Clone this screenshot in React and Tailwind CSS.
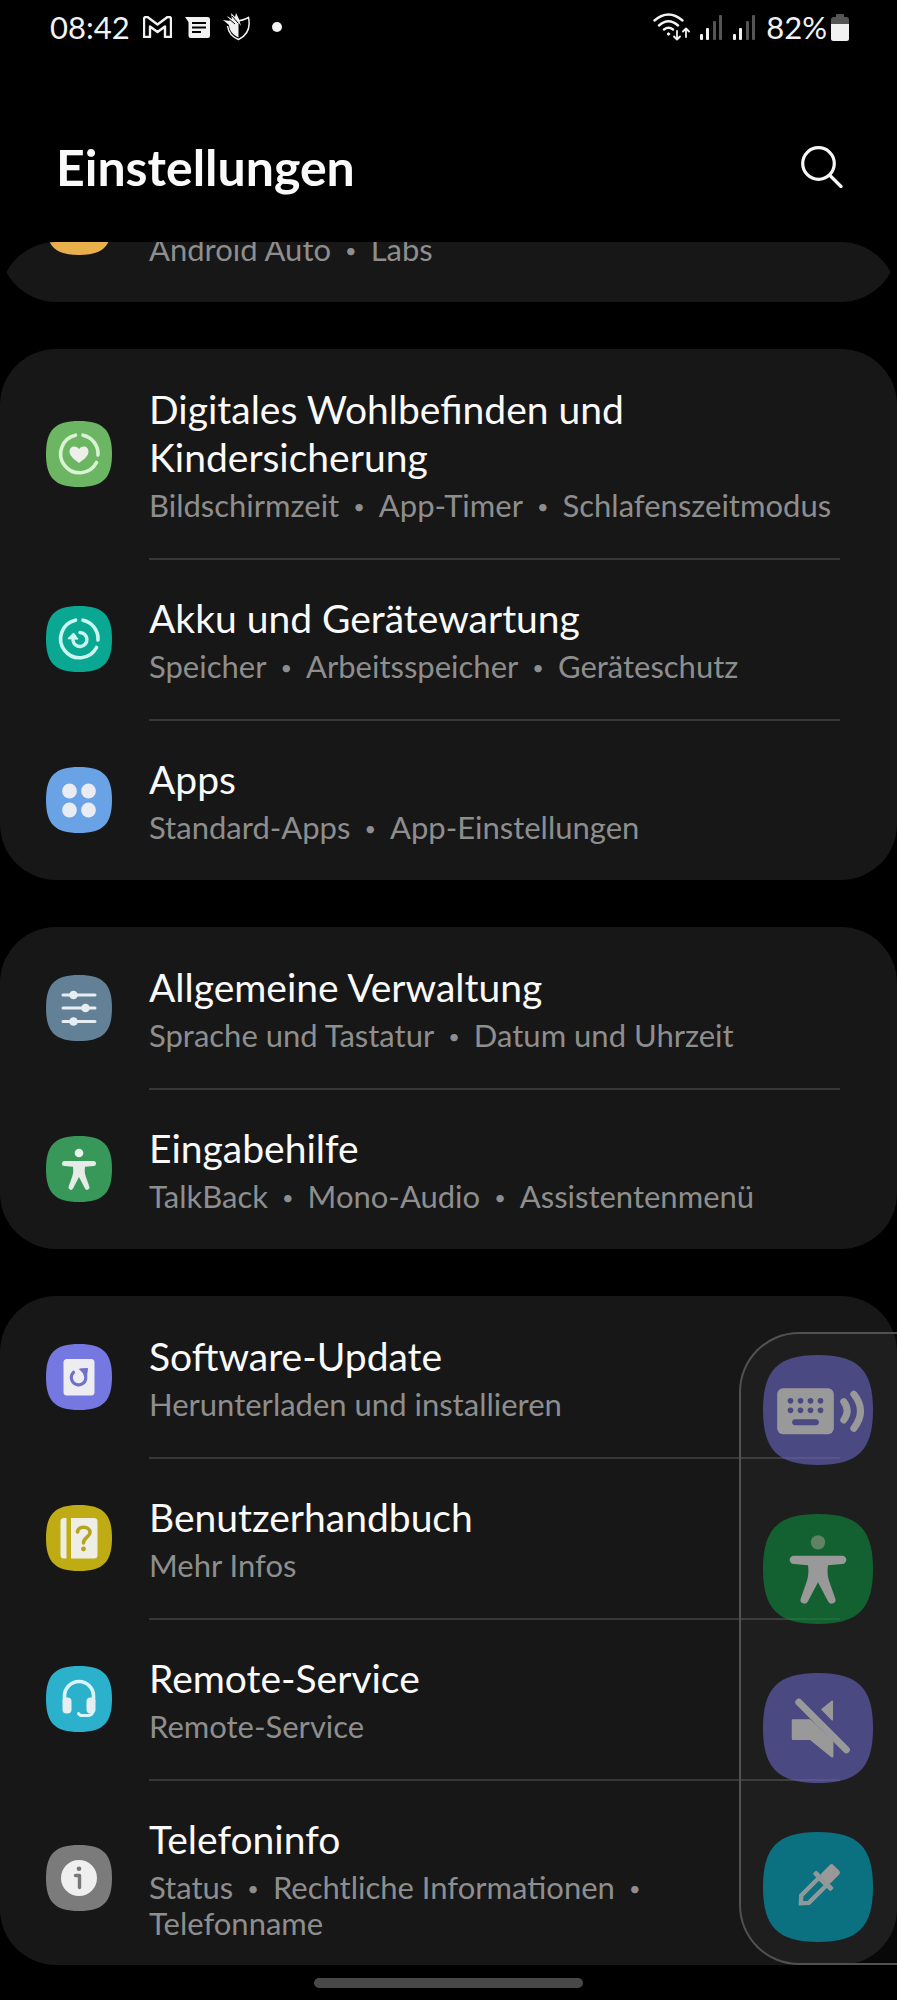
import React from 'react';
import { clsx } from 'clsx';

const SQUIRCLE = 'M33 0C57 0 66 9 66 33S57 66 33 66 0 57 0 33 9 0 33 0Z';

const Squircle = ({ color, className, children }) => (
  <svg viewBox="0 0 66 66" className={clsx('flex-shrink-0', className)} aria-hidden="true">
    <path d={SQUIRCLE} fill={color} />
    {children}
  </svg>
);

const Person = ({ head = '#e8f5ec', body = '#e6ebe7' }) => (
  <>
    <circle cx="33" cy="17" r="4.3" fill={head} />
    <path
      d="M18.500 25H47.500a2.500 2.500 0 0 1 0 5L39 30.700C38.500 34 38.700 37 39.600 40L43.300 50.500a2.300 2.300 0 0 1-4.300 1.900L33 41 27 52.400a2.300 2.300 0 0 1-4.300-1.900L26.400 40C27.300 37 27.500 34 27 30.700L18.500 30a2.500 2.500 0 0 1 0-5Z"
      fill={body}
    />
  </>
);

// three-part ring shared by the wellbeing and device care icons
const Ring = ({ color }) => (
  <path
    d="M29.500 14.200A19 19 0 1 0 50.500 41.500M37 14.200A19 19 0 0 1 52 34"
    fill="none"
    stroke={color}
    strokeWidth="3.600"
    strokeLinecap="round"
  />
);

const icons = {
  features: <Squircle color="#e8b04a" className="w-[66px]" />,
  wellbeing: (
    <Squircle color="#6cb663" className="w-[66px]">
      <Ring color="#d9f3d2" />
      <path d="M33 42C28 38.500 23.500 35 23.500 30.600c0-5.600 6.500-6.800 9.500-2.600 3-4.200 9.500-3 9.500 2.600C42.500 35 38 38.500 33 42Z" fill="#eeeeea" />
    </Squircle>
  ),
  care: (
    <Squircle color="#0aa893" className="w-[66px]">
      <Ring color="#c9f7ef" />
      <path d="M34 26.500A7 7 0 1 1 27 34.500" fill="none" stroke="#c9f7ef" strokeWidth="3.400" strokeLinecap="round" />
      <path d="M27.500 27.500 31.500 33 22.500 32.500Z" fill="#c9f7ef" stroke="#c9f7ef" strokeWidth="1.500" strokeLinejoin="round" />
    </Squircle>
  ),
  apps: (
    <Squircle color="#6aa2e6" className="w-[66px]">
      <g fill="#e9edf3">
        <circle cx="23.500" cy="24" r="7.400" />
        <circle cx="42.500" cy="24" r="7.400" />
        <circle cx="23.500" cy="43" r="7.400" />
        <circle cx="42.500" cy="43" r="7.400" />
      </g>
    </Squircle>
  ),
  general: (
    <Squircle color="#628196" className="w-[66px]">
      <path d="M17 20H49M17 33H49M17 46.500H49" stroke="#e6eef3" strokeWidth="3" strokeLinecap="round" />
      <g fill="#e6eef3">
        <circle cx="27.500" cy="20" r="4.300" />
        <circle cx="39.500" cy="33" r="4.300" />
        <circle cx="27.500" cy="46.500" r="4.300" />
      </g>
    </Squircle>
  ),
  accessibility: (
    <Squircle color="#37985a" className="w-[66px]">
      <Person />
    </Squircle>
  ),
  update: (
    <Squircle color="#7578e0" className="w-[66px]">
      <rect x="17.500" y="15" width="31" height="36.500" rx="3.500" fill="#ececf1" />
      <path d="M27.500 28.300A7.300 7.300 0 1 0 38.800 29.800" fill="none" stroke="#6f72cb" strokeWidth="3.200" strokeLinecap="round" />
      <path d="M33.500 25 41.500 24.500 40.500 32.500Z" fill="#6f72cb" stroke="#6f72cb" strokeWidth="1" strokeLinejoin="round" />
    </Squircle>
  ),
  manual: (
    <Squircle color="#bfac14" className="w-[66px]">
      <path d="M18 13H20.500V53.500H18a3.500 3.500 0 0 1-3.500-3.500V16.500A3.500 3.500 0 0 1 18 13Z" fill="#eeeee0" />
      <path d="M25 13H48a3.500 3.500 0 0 1 3.500 3.500V50a3.500 3.500 0 0 1-3.500 3.500H25Z" fill="#eeeee6" />
      <path d="M31.500 27C32 20.500 44 20.500 44 27.500 44 32 37.500 32.500 37.500 38" fill="none" stroke="#b5a41f" strokeWidth="3.600" strokeLinecap="round" />
      <circle cx="37.500" cy="44" r="2.400" fill="#b5a41f" />
    </Squircle>
  ),
  remote: (
    <Squircle color="#2cb1cd" className="w-[66px]">
      <path d="M18.500 36V30a14.500 14.500 0 0 1 29 0V36" fill="none" stroke="#d9f5fa" strokeWidth="3.600" />
      <rect x="16.500" y="31.500" width="9" height="16" rx="4" fill="#e5eef0" />
      <rect x="40.500" y="31.500" width="9" height="16" rx="4" fill="#e5eef0" />
      <path d="M47 44C47 48.500 45 49.500 42 49.500H36Q33.500 49.500 32.500 47.500" fill="none" stroke="#d9f5fa" strokeWidth="3" strokeLinecap="round" />
    </Squircle>
  ),
  info: (
    <Squircle color="#7b7b7b" className="w-[66px]">
      <circle cx="33" cy="33" r="18" fill="#efefef" />
      <circle cx="33" cy="23.700" r="2.300" fill="#777777" />
      <path d="M29.500 30.500H33.500V42.500" fill="none" stroke="#777777" strokeWidth="3.400" strokeLinecap="round" strokeLinejoin="round" />
    </Squircle>
  ),
};

const groups = [
  [{ id: 'features', title: [], info: [['Android Auto', 'Labs']] }],
  [
    {
      id: 'wellbeing',
      title: ['Digitales Wohlbefinden und', 'Kindersicherung'],
      info: [['Bildschirmzeit', 'App-Timer', 'Schlafenszeitmodus']],
    },
    { id: 'care', title: ['Akku und Gerätewartung'], info: [['Speicher', 'Arbeitsspeicher', 'Geräteschutz']] },
    { id: 'apps', title: ['Apps'], info: [['Standard-Apps', 'App-Einstellungen']] },
  ],
  [
    { id: 'general', title: ['Allgemeine Verwaltung'], info: [['Sprache und Tastatur', 'Datum und Uhrzeit']] },
    { id: 'accessibility', title: ['Eingabehilfe'], info: [['TalkBack', 'Mono-Audio', 'Assistentenmenü']] },
  ],
  [
    { id: 'update', title: ['Software-Update'], info: [['Herunterladen und installieren']] },
    { id: 'manual', title: ['Benutzerhandbuch'], info: [['Mehr Infos']] },
    { id: 'remote', title: ['Remote-Service'], info: [['Remote-Service']] },
    { id: 'info', title: ['Telefoninfo'], info: [['Status', 'Rechtliche Informationen', ''], ['Telefonname']] },
  ],
];

const shortcuts = [
  {
    label: 'Tastatur vorlesen',
    color: '#6966c5',
    glyph: (
      <>
        <rect x="8.500" y="20" width="34" height="27.500" rx="3.500" fill="#ebebeb" />
        <g fill="#6966c5">
          {[16.5, 22.5, 28.5, 34.5].map((x) => (
            <React.Fragment key={x}>
              <circle cx={x} cy="27.500" r="1.700" />
              <circle cx={x} cy="33.200" r="1.700" />
            </React.Fragment>
          ))}
          <rect x="17.500" y="38.500" width="16" height="3.600" rx="1.800" />
        </g>
        <path d="M48.500 28Q52.500 33.500 48.500 39M54.500 23.500Q62.500 33.500 54.500 44" fill="none" stroke="#ebebeb" strokeWidth="4.200" strokeLinecap="round" />
      </>
    ),
  },
  {
    label: 'Eingabehilfe',
    color: '#0d8e3c',
    glyph: <Person head="#8cc793" body="#ebebeb" />,
  },
  {
    label: 'Stumm',
    color: '#6966c5',
    glyph: (
      <g fill="#ebebeb" stroke="#ebebeb" strokeLinejoin="round">
        <path d="M41.500 17V28L35.500 21.800Z" strokeWidth="1" />
        <path d="M18 28.500H28L41.500 41V50L28.500 39.500H18Z" strokeWidth="1.500" />
        <path d="M21.500 17.500 50 46" strokeWidth="4.200" strokeLinecap="round" />
      </g>
    ),
  },
  {
    label: 'Farbauswahl',
    color: '#00a8c1',
    glyph: (
      <g transform="translate(33 32.500) rotate(45)">
        <path d="M-3.200-4V11L0 14.500 3.200 11V-4Z" fill="none" stroke="#dcebed" strokeWidth="2.600" />
        <rect x="-7.500" y="-6" width="15" height="3" rx="0.800" fill="#dcebed" />
        <rect x="-4" y="-15.500" width="8" height="10" rx="1.500" fill="#ebebeb" />
      </g>
    ),
  },
];

const Signal = () => (
  <svg viewBox="0 0 23 25" className="w-[23px]" aria-hidden="true">
    <rect x="0" y="19" width="3" height="6" rx="1" fill="#f2f2f2" />
    <rect x="6" y="13" width="3" height="12" rx="1" fill="#f2f2f2" />
    <rect x="13" y="6" width="3" height="19" rx="1" fill="#555555" />
    <rect x="19" y="0" width="3" height="25" rx="1" fill="#555555" />
  </svg>
);

const StatusBar = () => (
  <div className="flex h-[54px] flex-shrink-0 items-center justify-between pl-[50px] pr-12 text-[31px] text-[#f2f2f2]">
    <div className="flex items-center gap-[13px]">
      <span>08:42</span>
      <svg viewBox="0 0 29 22" className="w-[29px]" fill="none" stroke="currentColor" strokeWidth="2.400" strokeLinejoin="round" aria-hidden="true">
        <path d="M1 3V21H7V10.500L14.500 16 22 10.500V21H28V3Q28 1 26 1H24.500L14.500 8.500 4.500 1H3Q1 1 1 3Z" />
      </svg>
      <svg viewBox="0 0 25 21" className="w-[25px]" aria-hidden="true">
        <path d="M0 0H22.500A2.500 2.500 0 0 1 25 2.500V18.500A2.500 2.500 0 0 1 22.500 21H6A2.500 2.500 0 0 1 3.500 18.500V5Z" fill="currentColor" />
        <path d="M7 6H21M7 10.500H21M7 15H16" stroke="#000" strokeWidth="1.800" />
      </svg>
      <svg viewBox="0 0 28 28" className="w-7" aria-hidden="true">
        <path d="M12 8C17 8 21 7 25.500 4.500 27.500 14 25 22 15.500 26.500 9 24 5.500 20 4.500 13" fill="none" stroke="currentColor" strokeWidth="1.500" />
        <path d="M15.500 9.500V24.500C10 22 6.500 18 6 12L0 7 7 8 4 3 9 6 8 0 12 4 13 0 16 6 18 13Z" fill="currentColor" />
        <path d="M5 5 12 11M9 3 15 10" stroke="#000" strokeWidth="1" />
      </svg>
      <span className="ml-2 h-[10px] w-[10px] rounded-full bg-current" />
    </div>
    <div className="flex items-center gap-[10px]">
      <svg viewBox="0 0 37 28" className="w-[37px]" fill="none" stroke="currentColor" strokeWidth="2.400" strokeLinecap="round" strokeLinejoin="round" aria-hidden="true">
        <path d="M1.500 7.500Q15.500-4.500 29.500 7.500M6 12.500Q15.500 4 25 12.500M11 16.500Q15.500 13 20 16.500" />
        <circle cx="15.500" cy="21" r="1.200" fill="currentColor" strokeWidth="1" />
        <path d="M24 18V26M21 23.500 24 26.500 27 23.500M33 24V16M30 18.500 33 15.500 36 18.500" strokeWidth="1.800" />
      </svg>
      <Signal />
      <Signal />
      <div className="flex items-center gap-1">
        <span>82%</span>
        <svg viewBox="0 0 18 27" className="w-[18px]" aria-hidden="true">
          <path d="M5 1Q5 0 6 0H12Q13 0 13 1V3H15.500Q18 3 18 6V10H0V6Q0 3 2.500 3H5Z" fill="#555555" />
          <path d="M0 10H18V24.500Q18 27 15.500 27H2.500Q0 27 0 24.500Z" fill="currentColor" />
        </svg>
      </div>
    </div>
  </div>
);

const InfoLine = ({ parts }) => (
  <span className="block whitespace-nowrap">
    {parts.map((part, i) => (
      <React.Fragment key={part}>
        {i > 0 && <span className="mx-[14px] align-[3px] text-[20px] leading-none">•</span>}
        {part}
      </React.Fragment>
    ))}
  </span>
);

const SettingsRow = ({ item, first }) => (
  <a href={`#${item.id}`} className="flex items-center gap-[37px] pl-[46px] pr-[57px]">
    {icons[item.id]}
    <div className={clsx('min-w-0 flex-1 border-t-2 pb-[35px] pt-[34px]', first ? 'border-transparent' : 'border-[#373737]')}>
      <div className="min-h-12 text-[39px] leading-[48px] text-[#fafafa]">
        {item.title.map((line) => (
          <span key={line} className="block whitespace-nowrap">{line}</span>
        ))}
      </div>
      <div className="mt-1.5 text-[31px] leading-9 text-[#8e8e8e]">
        {item.info.map((parts) => (
          <InfoLine key={parts[0]} parts={parts} />
        ))}
      </div>
    </div>
  </a>
);

const ShortcutPanel = () => (
  <div className="absolute bottom-[35px] right-0 flex flex-col gap-[49px] rounded-l-[60px] border-2 border-r-0 border-[#515151] bg-white/[0.03] py-[21px] pl-[22px] pr-6">
    {shortcuts.map((item) => (
      <button key={item.label} type="button" aria-label={item.label} className="opacity-60">
        <Squircle color={item.color} className="w-[110px]">{item.glyph}</Squircle>
      </button>
    ))}
  </div>
);

export default function App() {
  return (
    <div className="relative flex h-screen flex-col overflow-hidden bg-black font-['Lato','Open_Sans',sans-serif]">
      <StatusBar />

      <header className="flex h-[188px] flex-shrink-0 items-center justify-between pl-14 pr-[54px] pt-[38px]">
        <h1 className="text-[50px] font-bold text-[#fafafa]">Einstellungen</h1>
        <button type="button" aria-label="Suchen">
          <svg viewBox="0 0 42 42" className="w-[42px]" fill="none" stroke="#f7f7f7" strokeWidth="3.200" strokeLinecap="round" aria-hidden="true">
            <circle cx="17.500" cy="17.500" r="15.800" />
            <path d="M29 29.500 40 40.500" />
          </svg>
        </button>
      </header>

      <main className="min-h-0 flex-1 overflow-y-auto rounded-[56px] [scrollbar-width:none]">
        <div className="-mt-[101px] flex flex-col gap-[47px]">
          {groups.map((items) => (
            <section key={items[0].id} className="rounded-[56px] bg-[#171717]">
              {items.map((item, i) => (
                <SettingsRow key={item.id} item={item} first={i === 0} />
              ))}
            </section>
          ))}
        </div>
      </main>

      <div className="flex h-[35px] flex-shrink-0 items-center justify-center">
        <div className="h-[10px] w-[30%] rounded-full bg-[#484848]" />
      </div>

      <ShortcutPanel />
    </div>
  );
}
